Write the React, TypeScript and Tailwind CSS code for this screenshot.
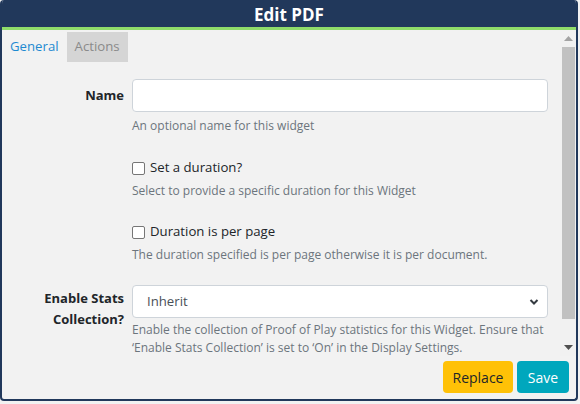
import React from "react";

function Checkbox() {
  return <div className="w-[13px] h-[13px] border border-[#767676] rounded-[2px] bg-white shrink-0" />;
}

export default function App() {
  return (
    <div className="w-[580px] h-[404px] bg-[#f2f2f2]" style={{ fontFamily: '"Open Sans", "Noto Sans", sans-serif' }}>
      <div className="w-[578px] h-[401px] flex flex-col border-2 border-t-0 border-[#21385b] rounded-[4px] overflow-hidden bg-[#f2f2f2]">
        <div className="h-[27px] shrink-0 bg-[#21385b] flex items-center justify-center text-white font-bold text-[17px] leading-none pt-[1px]">
          Edit PDF
        </div>
        <div className="h-[3px] shrink-0 bg-[#8fdc6a]" />
        <div className="flex flex-1 min-h-0">
          <div className="flex-1 flex flex-col overflow-hidden">
            <div className="flex shrink-0 mt-[2px] h-[30px] text-[13.2px]">
              <div className="px-2 flex items-center text-[#1e8ad1]">General</div>
              <div className="px-2 flex items-center bg-[#d5d5d5] text-[#8a8a8a]">Actions</div>
            </div>
            <div className="flex flex-col shrink-0 mt-[17px]">
              {/* Name */}
              <div className="flex gap-2 shrink-0">
                <div className="w-[122px] text-right text-[13px] font-bold text-[#212529] pt-[5px] leading-[22px]">Name</div>
                <div className="w-[416px] flex flex-col">
                  <div className="h-[33px] shrink-0 bg-white border border-[#ced4da] rounded-[4px]" />
                  <div className="text-[12px] text-[#6c757d] mt-[6px] leading-[16px]">An optional name for this widget</div>
                </div>
              </div>
              {/* Set duration */}
              <div className="flex gap-2 mt-[24px] shrink-0">
                <div className="w-[122px]" />
                <div className="w-[416px] flex flex-col">
                  <div className="flex items-center gap-[5px] h-[20px]">
                    <Checkbox />
                    <span className="text-[13.2px] text-[#212529]">Set a duration?</span>
                  </div>
                  <div className="text-[12px] text-[#6c757d] mt-[5px] leading-[16px]">Select to provide a specific duration for this Widget</div>
                </div>
              </div>
              {/* per page */}
              <div className="flex gap-2 mt-[23px] shrink-0">
                <div className="w-[122px]" />
                <div className="w-[416px] flex flex-col">
                  <div className="flex items-center gap-[5px] h-[20px]">
                    <Checkbox />
                    <span className="text-[13.2px] text-[#212529]">Duration is per page</span>
                  </div>
                  <div className="text-[12px] text-[#6c757d] mt-[5px] leading-[16px]">The duration specified is per page otherwise it is per document.</div>
                </div>
              </div>
              {/* Stats */}
              <div className="flex gap-2 mt-[22px] shrink-0">
                <div className="w-[122px] text-right text-[13px] font-bold text-[#212529] pt-[3px] leading-[21px]">
                  Enable Stats<br />Collection?
                </div>
                <div className="w-[416px] flex flex-col">
                  <div className="h-[33px] shrink-0 bg-white border border-[#ced4da] rounded-[4px] flex items-center justify-between pl-[14px] pr-[8px]">
                    <span className="text-[13.2px] text-[#495057]">Inherit</span>
                    <svg width="10" height="8" viewBox="0 0 10 8">
                      <path d="M1.5 2 L5 5.5 L8.5 2" fill="none" stroke="#343a40" strokeWidth="2" />
                    </svg>
                  </div>
                  <div className="text-[12px] text-[#6c757d] mt-[3px] leading-[18px]">
                    Enable the collection of Proof of Play statistics for this Widget. Ensure that ‘Enable Stats Collection’ is set to ‘On’ in the Display Settings.
                  </div>
                </div>
              </div>
            </div>
          </div>
          {/* scrollbar */}
          <div className="w-[16px] flex flex-col items-center bg-[#f1f1f1]">
            <div className="h-[17px] shrink-0 flex items-center justify-center">
              <svg width="9" height="5" viewBox="0 0 9 5"><path d="M0 5 L4.5 0 L9 5 Z" fill="#a3a3a3" /></svg>
            </div>
            <div className="w-[13px] h-[272px] shrink-0 bg-[#c1c1c1]" />
            <div className="flex-1" />
            <div className="h-[17px] shrink-0 flex items-center justify-center">
              <svg width="9" height="5" viewBox="0 0 9 5"><path d="M0 0 L4.5 5 L9 0 Z" fill="#505050" /></svg>
            </div>
          </div>
        </div>
        <div className="h-[43px] shrink-0 flex items-start justify-end gap-[4px] pr-[7px] pt-[5px]">
          <div className="h-[32px] w-[70px] bg-[#ffc107] rounded-[4px] flex items-center justify-center text-[14px] text-[#212529]">Replace</div>
          <div className="h-[32px] w-[52px] bg-[#00a7bd] rounded-[4px] flex items-center justify-center text-[14px] text-white">Save</div>
        </div>
      </div>
    </div>
  );
}
